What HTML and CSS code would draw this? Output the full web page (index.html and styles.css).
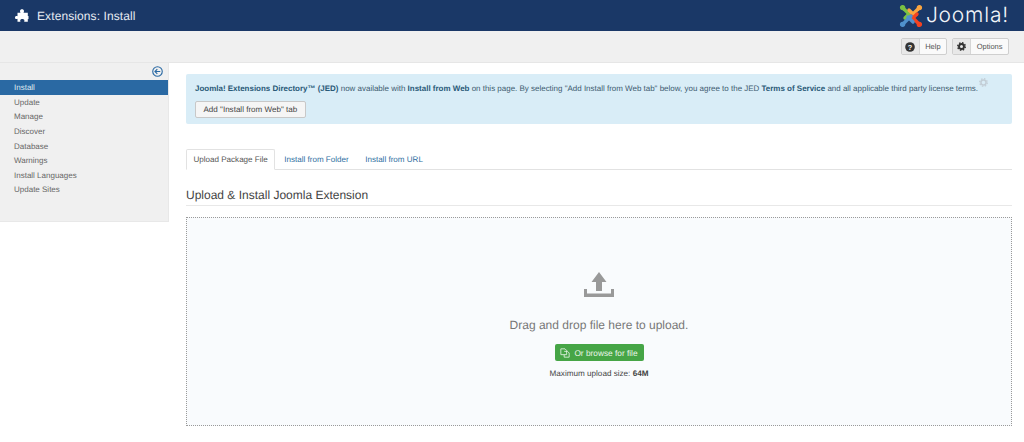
FILE: index.html
```html
<!DOCTYPE html>
<html lang="en">
<head>
<meta charset="utf-8">
<title>Extensions: Install</title>
<link rel="stylesheet" href="styles.css">
</head>
<body>
<header class="topbar">
  <div class="title-group">
    <svg class="puzzle" width="14" height="13" viewBox="0 0 14 13"><path fill="#fff" d="M5 2.200C5 .9 5.900.3 7 .3S9 .9 9 2.200c0 .7-.3 1-.5 1.500H12.800V7c.1 0 .4-.1.7-.1V10.200c-.3 0-.6-.1-.7-.1V12.800H9.200c.1-.6.2-1 .2-1.300 0-1-1-1.500-2.100-1.500s-2.100.5-2.100 1.500c0 .3.1.7.200 1.300H2.500V9.800c-.3.200-.6.300-1 .3C.6 10.100 0 9.400 0 8.500S.6 6.900 1.500 6.900c.4 0 .7.100 1 .3V3.700H5.500C5.300 3.200 5 2.900 5 2.200z"/></svg>
    <h1 class="page-title">Extensions: Install</h1>
  </div>
  <div class="brand">
    <svg class="brand-mark" width="24" height="24" viewBox="0 0 24 24" fill="none" stroke-width="3.400" stroke-linecap="round">
      <g stroke="#7ac143"><circle cx="3.600" cy="3.600" r="2" fill="#7ac143" stroke-width="1.400"/><path d="M5 5 12 12"/><path d="M6 14 11 9"/></g>
      <g stroke="#f9a541" transform="rotate(90 12 12)"><circle cx="3.600" cy="3.600" r="2" fill="#f9a541" stroke-width="1.400"/><path d="M5 5 12 12"/><path d="M6 14 11 9"/></g>
      <g stroke="#f44321" transform="rotate(180 12 12)"><circle cx="3.600" cy="3.600" r="2" fill="#f44321" stroke-width="1.400"/><path d="M5 5 12 12"/><path d="M6 14 11 9"/></g>
      <g stroke="#5091cd" transform="rotate(270 12 12)"><circle cx="3.600" cy="3.600" r="2" fill="#5091cd" stroke-width="1.400"/><path d="M5 5 12 12"/><path d="M6 14 11 9"/></g>
    </svg>
    <span class="brand-name">Joomla!</span>
  </div>
</header>
<div class="toolbar">
  <button class="tool-btn"><span class="tool-icon"><svg width="10" height="10" viewBox="0 0 11 11"><circle cx="5.500" cy="5.500" r="5.300" fill="#333"/><text x="5.500" y="8.500" text-anchor="middle" class="qmark">?</text></svg></span><span class="tool-label">Help</span></button>
  <button class="tool-btn"><span class="tool-icon"><svg width="9" height="9" viewBox="0 0 12 12"><circle cx="6" cy="6" r="3.300" fill="none" stroke="#333" stroke-width="2.600"/><circle cx="6" cy="6" r="5" fill="none" stroke="#333" stroke-width="2" stroke-dasharray="2 1.930"/></svg></span><span class="tool-label">Options</span></button>
</div>
<div class="layout">
  <aside class="sidebar">
    <div class="collapse-row"><svg width="11" height="11" viewBox="0 0 12 12" fill="none" stroke="#2a69a3" stroke-width="1.200"><circle cx="6" cy="6" r="5.200"/><path d="M9 6H3.500M5.800 3.400 3.200 6l2.600 2.600"/></svg></div>
    <nav class="side-nav">
      <a class="side-link active">Install</a>
      <a class="side-link">Update</a>
      <a class="side-link">Manage</a>
      <a class="side-link">Discover</a>
      <a class="side-link">Database</a>
      <a class="side-link">Warnings</a>
      <a class="side-link">Install Languages</a>
      <a class="side-link">Update Sites</a>
    </nav>
  </aside>
  <main class="content">
    <div class="notice">
      <p class="notice-text"><b>Joomla! Extensions Directory™ (JED)</b> now available with <b>Install from Web</b> on this page. By selecting "Add Install from Web tab" below, you agree to the JED <b>Terms of Service</b> and all applicable third party license terms.</p>
      <svg class="notice-gear" width="9" height="9" viewBox="0 0 12 12"><circle cx="6" cy="6" r="3.400" fill="none" stroke="#c3ced6" stroke-width="2"/><circle cx="6" cy="6" r="5" fill="none" stroke="#c3ced6" stroke-width="1.800" stroke-dasharray="2 1.930"/></svg>
      <button class="notice-btn">Add "Install from Web" tab</button>
    </div>
    <div class="tabs">
      <a class="tab current">Upload Package File</a>
      <a class="tab">Install from Folder</a>
      <a class="tab">Install from URL</a>
    </div>
    <h2 class="section-title">Upload &amp; Install Joomla Extension</h2>
    <section class="dropzone">
      <svg class="upload-icon" width="30" height="26" viewBox="0 0 30 26" fill="#999"><path d="M15 1 22.500 11H18V20H12V11H7.500Z"/><path d="M0 18H3V22.500H27V18H30V26H0Z"/></svg>
      <p class="drop-text">Drag and drop file here to upload.</p>
      <button class="browse-btn"><svg width="10" height="10" viewBox="0 0 12 12" fill="none" stroke="#e8f4e8" stroke-width="1"><path d="M1 1H6L8 3V8H1Z"/><path d="M5 4H9L11 6V11H5V8"/></svg>Or browse for file</button>
      <p class="limit">Maximum upload size: <b>64M</b></p>
    </section>
  </main>
</div>
</body>
</html>
```
FILE: styles.css
```css
* { box-sizing: border-box; }
html, body { margin: 0; height: 442px; overflow: hidden; background: #fff; }
body { font-family: "Liberation Sans", Arial, sans-serif; font-size: 9px; color: #555; text-rendering: geometricPrecision; }
.topbar { height: 31px; background: #1a3867; display: flex; justify-content: space-between; align-items: center; padding: 0 15px 0 15px; }
.title-group { display: flex; align-items: center; gap: 8px; }
.page-title { margin: 0; font-size: 12px; font-weight: 400; color: #e6ebf2; letter-spacing: .1px; }
.brand { display: flex; align-items: center; gap: 3px; }
.brand-name { font-family: Inter, Lato, sans-serif; font-size: 21px; line-height: 24px; color: #f2f5f9; font-weight: 300; letter-spacing: .800px; }
.toolbar { height: 32px; background: #f0f0f0; border-bottom: 1px solid #e6e6e6; display: flex; justify-content: flex-end; align-items: center; gap: 5px; padding: 0 15px 0 0; }
.tool-btn { height: 17px; padding: 0; display: flex; border: 1px solid #cfcfcf; border-radius: 2px; background: #fafafa; font: 7.500px "Liberation Sans", sans-serif; color: #555; align-items: stretch; text-rendering: geometricPrecision; }
.tool-icon { width: 18px; background: #e8e8e8; border-right: 1px solid #d6d6d6; display: flex; align-items: center; justify-content: center; }
.tool-label { padding: 0 5.500px; display: flex; align-items: center; }
.qmark { font: bold 8px "Liberation Sans", sans-serif; fill: #f0f0f0; }
.layout { display: flex; align-items: flex-start; }
.sidebar { flex: none; width: 169px; height: 159px; background: #f0f0f0; border-right: 1px solid #e8e8e8; border-bottom: 1px solid #e8e8e8; }
.collapse-row { height: 17px; display: flex; justify-content: flex-end; align-items: flex-end; padding: 0 5px 3px 0; }
.side-nav { display: flex; flex-direction: column; }
.side-link { height: 14.650px; line-height: 15px; padding-left: 14px; font-size: 8px; color: #666; }
.side-link.active { background: #2a69a3; color: #dfe8f0; }
.content { flex: 1; min-width: 0; padding: 11px 12px 0 17px; }
.notice { position: relative; height: 50px; background: #d9edf7; border-radius: 2px; padding: 9px 9px 0; }
.notice-text { margin: 0; font-size: 7.970px; line-height: 11px; color: #3d5b70; white-space: nowrap; }
.notice-text b { color: #2a5a78; }
.notice-gear { position: absolute; right: 24px; top: 4px; }
.notice-btn { display: block; margin-top: 7px; height: 17px; padding: 0 7.500px; font: 8.050px "Liberation Sans", sans-serif; color: #444; background: #f5f5f5; border: 1px solid #c8c8c8; border-radius: 2px; text-rendering: geometricPrecision; }
.tabs { display: flex; gap: 1.500px; margin-top: 25px; height: 21px; border-bottom: 1px solid #e2e2e2; }
.tab { padding: 0 6.500px; height: 21px; line-height: 20px; font-size: 8.050px; color: #2f6f9f; border: 1px solid transparent; }
.tab.current { color: #555; background: #fff; border-color: #e2e2e2 #e2e2e2 #fff; border-radius: 2px 2px 0 0; }
.section-title { margin: 18px 0 0; padding-bottom: 2px; font-size: 12px; line-height: 15px; font-weight: 400; color: #444; border-bottom: 1px solid #e8e8e8; }
.dropzone { margin-top: 11px; height: 209px; background: #f9fbfd; border: 1px dotted #9a9a9a; display: flex; flex-direction: column; align-items: center; padding-top: 53px; }
.upload-icon { display: block; }
.drop-text { margin: 21px 0 0; font-size: 12px; line-height: 15px; color: #777; }
.browse-btn { margin-top: 11px; height: 17px; width: 89px; padding: 0; display: flex; align-items: center; justify-content: center; gap: 4px; background: #46a546; color: #e8f4e8; border: 0; border-radius: 2px; font: 8.300px "Liberation Sans", sans-serif; white-space: nowrap; text-rendering: geometricPrecision; }
.limit { margin: 8px 0 0; font-size: 8.140px; color: #444; }
```
